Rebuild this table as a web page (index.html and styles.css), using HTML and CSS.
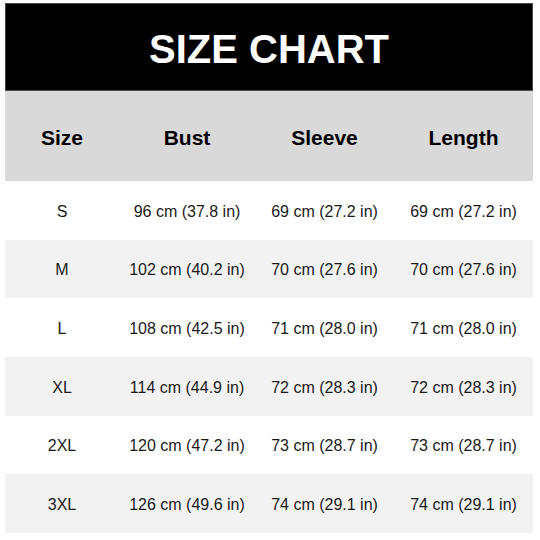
FILE: index.html
```html
<!DOCTYPE html>
<html>
<head>
<meta charset="utf-8">
<link rel="stylesheet" href="styles.css">
</head>
<body>
<div class="chart">
  <div class="title">SIZE CHART</div>
  <div class="row head">
    <div>Size</div><div>Bust</div><div>Sleeve</div><div>Length</div>
  </div>
  <div class="row">
    <div>S</div><div>96 cm (37.8 in)</div><div>69 cm (27.2 in)</div><div>69 cm (27.2 in)</div>
  </div>
  <div class="row alt">
    <div>M</div><div>102 cm (40.2 in)</div><div>70 cm (27.6 in)</div><div>70 cm (27.6 in)</div>
  </div>
  <div class="row">
    <div>L</div><div>108 cm (42.5 in)</div><div>71 cm (28.0 in)</div><div>71 cm (28.0 in)</div>
  </div>
  <div class="row alt">
    <div>XL</div><div>114 cm (44.9 in)</div><div>72 cm (28.3 in)</div><div>72 cm (28.3 in)</div>
  </div>
  <div class="row">
    <div>2XL</div><div>120 cm (47.2 in)</div><div>73 cm (28.7 in)</div><div>73 cm (28.7 in)</div>
  </div>
  <div class="row alt">
    <div>3XL</div><div>126 cm (49.6 in)</div><div>74 cm (29.1 in)</div><div>74 cm (29.1 in)</div>
  </div>
</div>
</body>
</html>
```
FILE: styles.css
```css
html, body {
  margin: 0;
  padding: 0;
  background: #ffffff;
}
body {
  font-family: "Liberation Sans", Arial, sans-serif;
  color: #1a1a1a;
}
.chart {
  margin: 3px 0 0 5px;
  width: 528px;
}
.title {
  height: 88px;
  box-sizing: border-box;
  background: #000000;
  border: 1px solid #4a4a4a;
  color: #ffffff;
  font-weight: bold;
  font-size: 40px;
  display: flex;
  align-items: center;
  justify-content: center;
  padding-top: 5px;
}
.row {
  display: grid;
  grid-template-columns: 114px 136px 139px 139px;
  height: 58.67px;
  font-size: 16px;
}
.row > div {
  display: flex;
  align-items: center;
  justify-content: center;
  white-space: nowrap;
  padding-top: 3px;
}
.row.alt {
  background: #f2f2f2;
}
.row.head {
  height: 90px;
  background: #d9d9d9;
  font-weight: bold;
  font-size: 21px;
  color: #000000;
}
.row.head > div {
  padding-top: 3px;
}
```
